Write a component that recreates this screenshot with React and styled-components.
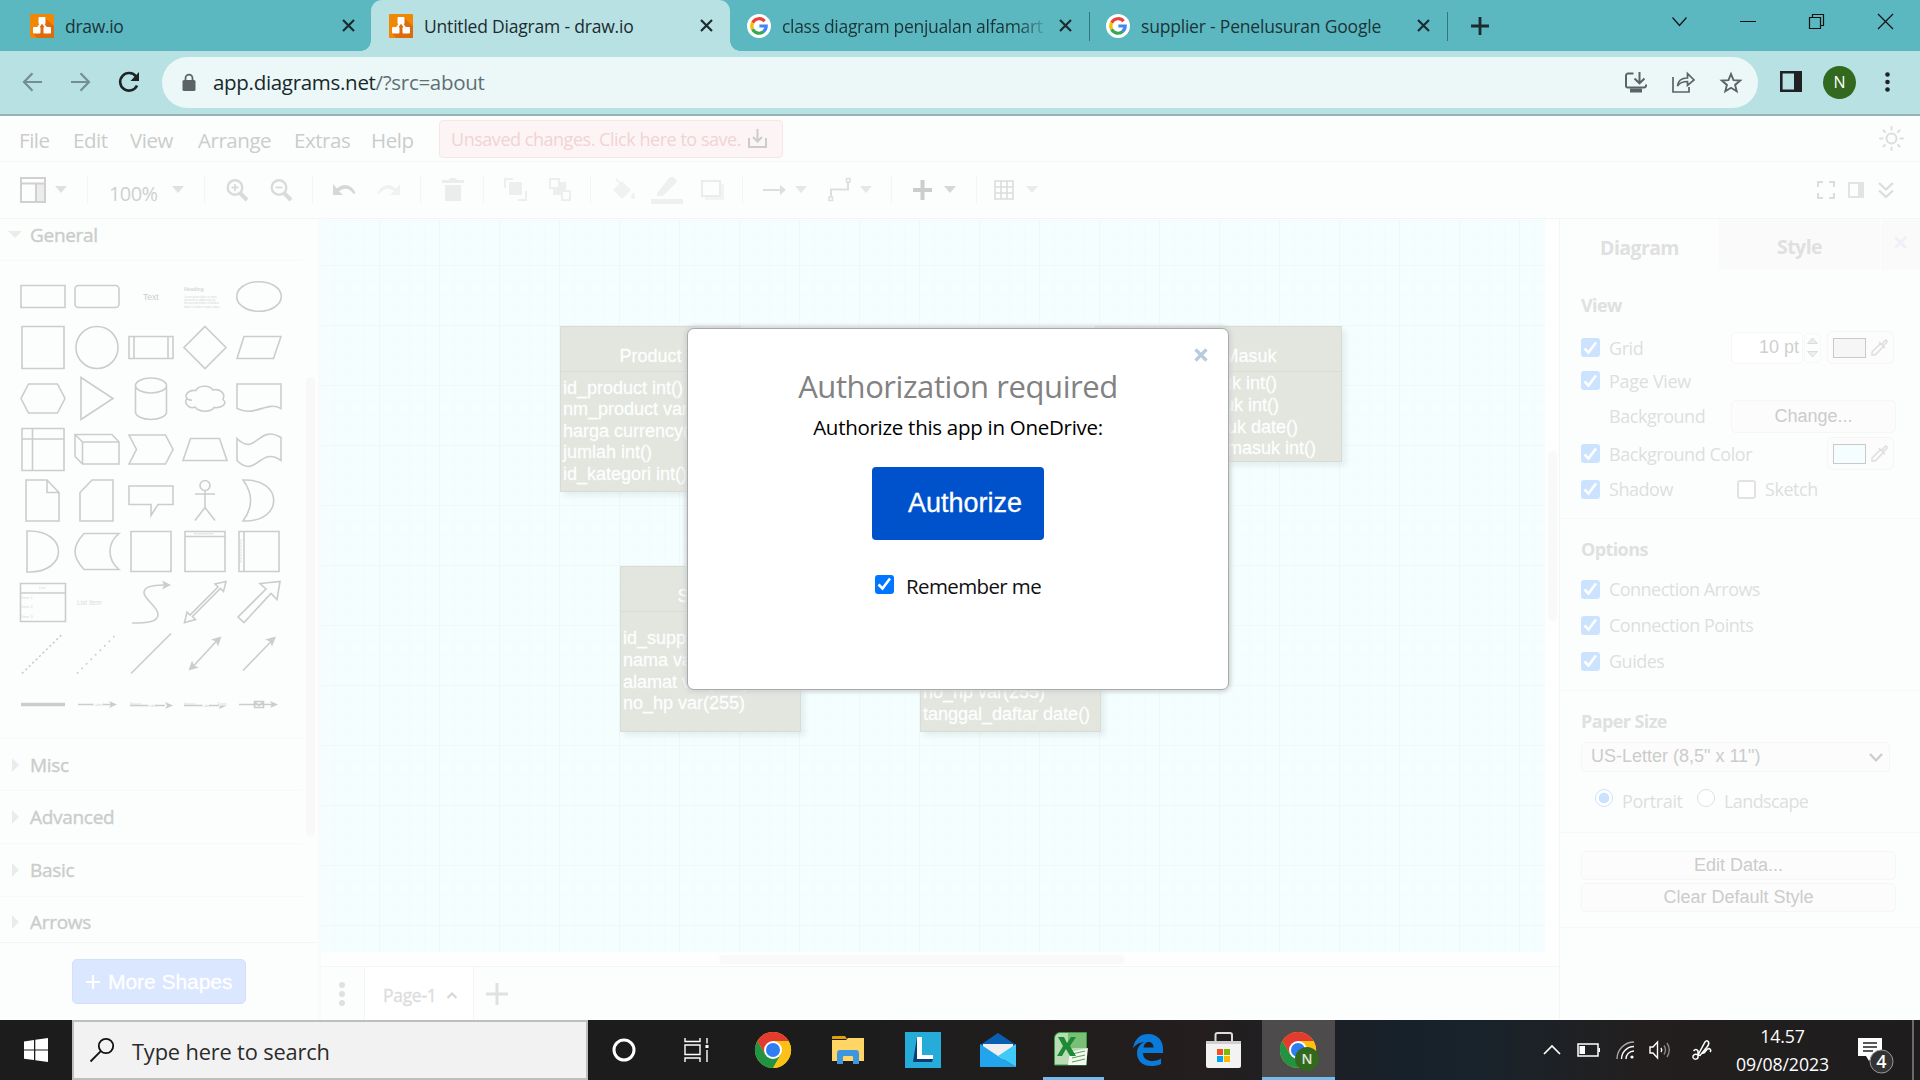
import React from "react";
import styled, { createGlobalStyle, css } from "styled-components";

const ui = `"Open Sans", "Noto Sans", sans-serif`;
const arial = `"Liberation Sans", Arial, sans-serif`;

const Global = createGlobalStyle`
  * { box-sizing: border-box; }
  html, body { margin: 0; padding: 0; overflow: hidden; }
  svg { display: block; flex: none; overflow: visible; }
`;

const Screen = styled.div`
  width: 1920px;
  height: 1080px;
  display: flex;
  flex-direction: column;
  overflow: hidden;
  background: #fcfefd;
  font-family: ${ui};
`;

const Text = styled.span`
  font-family: ${(p) => (p.$arial ? arial : ui)};
  font-size: ${(p) => p.$size || 18}px;
  font-weight: ${(p) => p.$weight || 400};
  letter-spacing: ${(p) => (p.$ls !== undefined ? p.$ls : p.$arial ? 0 : -0.3)}px;
  color: ${(p) => p.$color || "#dedede"};
  margin-left: ${(p) => p.$ml || 0}px;
  padding-top: ${(p) => p.$pt || 0}px;
  -webkit-text-stroke: ${(p) => p.$stroke || 0}px currentColor;
  white-space: nowrap;
  line-height: 1.2;
  flex: none;
`;

/* ---------- browser chrome ---------- */

const TabStrip = styled.div`
  height: 51px;
  flex: none;
  display: flex;
  background: #5bb8c1;
`;

const Tab = styled.div`
  position: relative;
  width: ${(p) => p.$w}px;
  height: 51px;
  padding-left: ${(p) => p.$pl}px;
  padding-right: ${(p) => p.$pr}px;
  display: flex;
  align-items: center;
  gap: 11px;
  ${(p) =>
    p.$active &&
    css`
      background: #b8e1e4;
      border-radius: 11px 11px 0 0;
      &::before,
      &::after {
        content: "";
        position: absolute;
        bottom: 0;
        width: 10px;
        height: 10px;
      }
      &::before {
        left: -10px;
        background: radial-gradient(circle at 0 0, #5bb8c1 9.5px, #b8e1e4 10px);
      }
      &::after {
        right: -10px;
        background: radial-gradient(circle at 100% 0, #5bb8c1 9.5px, #b8e1e4 10px);
      }
    `}
`;

const TabTitle = styled(Text)`
  flex: 1;
  overflow: hidden;
  line-height: 26px;
  -webkit-mask-image: ${(p) => (p.$fade ? "linear-gradient(90deg, #000 235px, transparent 268px)" : "none")};
`;

const TabDivider = styled.div`
  width: 1px;
  height: 29px;
  margin-top: 12px;
  background: #35747b;
`;

const WindowButtons = styled.div`
  display: flex;
  margin-left: auto;
  gap: 53px;
  padding: 14px 27px 0 0;
`;

const NewTab = styled.div`
  padding: 17px 0 0 23px;
`;

const AddressRow = styled.div`
  height: 65px;
  flex: none;
  display: flex;
  align-items: center;
  padding: 0 28px 2px 22px;
  background: #b8e1e4;
  border-bottom: 2px solid #95b4b8;
`;

const NavIcons = styled.div`
  display: flex;
  align-items: center;
  gap: 27px;
  width: 140px;
`;

const Omnibox = styled.div`
  width: 1596px;
  height: 51px;
  margin-top: 1px;
  border-radius: 26px;
  background: #ecf8f8;
  display: flex;
  align-items: center;
  padding: 0 16px 0 20px;
`;

const OmniActions = styled.div`
  display: flex;
  gap: 25px;
  margin-left: auto;
`;

const Avatar = styled.div`
  width: 33px;
  height: 33px;
  border-radius: 50%;
  margin: 2px 29px 0 21px;
  background: #33691e;
  display: flex;
  align-items: center;
  justify-content: center;
`;

const TabClose = () => (
  <svg width="13" height="13" viewBox="0 0 13 13">
    <path d="M1 1L12 12M12 1L1 12" stroke="#1c2b2e" strokeWidth="2.2" />
  </svg>
);

const DrawioLogo = () => (
  <svg width="24" height="24" viewBox="0 0 24 24">
    <rect width="24" height="24" rx="1" fill="#f08705" />
    <path d="M15 4L24 12V24H7L3 19L10 13Z" fill="#df6c0c" />
    <path d="M12 8L7 15M12 8L17 15" stroke="#fff" strokeWidth="2" />
    <rect x="8.5" y="3" width="7" height="7" rx="1" fill="#fff" />
    <rect x="3" y="13" width="7.5" height="6.5" rx="1" fill="#fff" />
    <rect x="13.5" y="13" width="7.5" height="6.5" rx="1" fill="#fff" />
  </svg>
);

const GoogleLogo = () => (
  <svg width="24" height="24" viewBox="0 0 24 24">
    <circle cx="12" cy="12" r="12" fill="#fff" />
    <g fill="none" strokeWidth="3.2">
      <path d="M17.6 7.3A7.2 7.2 0 0 0 5.6 8.7" stroke="#ea4335" />
      <path d="M5.6 8.7A7.2 7.2 0 0 0 5.6 15.3" stroke="#fbbc05" />
      <path d="M5.6 15.3A7.2 7.2 0 0 0 16.8 17.4" stroke="#34a853" />
      <path d="M16.6 17.5A7.2 7.2 0 0 0 19.2 12H12.4" stroke="#4285f4" />
    </g>
  </svg>
);

function Browser() {
  return (
    <>
      <TabStrip>
        <Tab $w={371} $pl={30} $pr={16}>
          <DrawioLogo />
          <TabTitle $size={17.5} $color="#1b3438">draw.io</TabTitle>
          <TabClose />
        </Tab>
        <Tab $active $w={359} $pl={18} $pr={17}>
          <DrawioLogo />
          <TabTitle $size={17.5} $color="#1c2b2e" $ls={-0.2}>Untitled Diagram - draw.io</TabTitle>
          <TabClose />
        </Tab>
        <Tab $w={359} $pl={17} $pr={17}>
          <GoogleLogo />
          <TabTitle $fade $size={17.5} $color="#1b3438">class diagram penjualan alfamart</TabTitle>
          <TabClose />
        </Tab>
        <TabDivider />
        <Tab $w={357} $pl={16} $pr={17}>
          <GoogleLogo />
          <TabTitle $size={17.5} $color="#1b3438" $ls={-0.2}>supplier - Penelusuran Google</TabTitle>
          <TabClose />
        </Tab>
        <TabDivider />
        <NewTab>
          <svg width="18" height="18" viewBox="0 0 18 18">
            <path d="M9 0V18M0 9H18" stroke="#1c2b2e" strokeWidth="2.8" />
          </svg>
        </NewTab>
        <WindowButtons>
          <svg width="15" height="15" viewBox="0 0 15 15" fill="none" stroke="#111" strokeWidth="1.2">
            <path d="M0.5 3.5L7.5 11.5L14.5 3.5" />
          </svg>
          <svg width="16" height="15" viewBox="0 0 16 15">
            <path d="M0 7.5H16" stroke="#111" />
          </svg>
          <svg width="16" height="15" viewBox="0 0 16 15" fill="none" stroke="#111" strokeWidth="1.2">
            <path d="M0.5 3.5H11.5V14.5H0.5ZM3.5 3.5V0.5H14.5V11.5H11.5" />
          </svg>
          <svg width="15" height="15" viewBox="0 0 15 15">
            <path d="M0 0L15 15M15 0L0 15" stroke="#111" strokeWidth="1.2" />
          </svg>
        </WindowButtons>
      </TabStrip>
      <AddressRow>
        <NavIcons>
          <svg width="21" height="20" viewBox="0 0 21 20" fill="none" stroke="#738f92" strokeWidth="2.2">
            <path d="M20 10H2M10.5 1.2L2 10L10.5 18.8" />
          </svg>
          <svg width="21" height="20" viewBox="0 0 21 20" fill="none" stroke="#738f92" strokeWidth="2.2">
            <path d="M1 10H19M10.5 1.2L19 10L10.5 18.8" />
          </svg>
          <svg width="22" height="20" viewBox="0 0 22 20">
            <path d="M18 4.5A8.8 8.8 0 1 0 19 13.5" fill="none" stroke="#1d2426" strokeWidth="2.6" />
            <path d="M21 0V9H12.5Z" fill="#1d2426" />
          </svg>
        </NavIcons>
        <Omnibox>
          <svg width="14" height="17" viewBox="0 0 14 17">
            <rect x="0.5" y="6" width="13" height="11" rx="1.5" fill="#5b6366" />
            <path d="M3.5 7V4.2a3.5 3.5 0 0 1 7 0V7" fill="none" stroke="#5b6366" strokeWidth="1.8" />
          </svg>
          <Text $size={20.5} $ml={17} $color="#17282b" $ls={-0.3}>
            app.diagrams.net<Text as="span" $size={20.5} $color="#5f6f73" $ls={-0.3}>/?src=about</Text>
          </Text>
          <OmniActions>
            <svg width="22" height="21" viewBox="0 0 22 21" fill="none" stroke="#5b6366" strokeWidth="2">
              <path d="M8.5 1.5H3A2 2 0 0 0 1 3.5V14A1.5 1.5 0 0 0 2.5 15.5H19A2 2 0 0 0 21 14V12.5M14.5 0V10M9.5 6.5L14.5 11.3L19.5 6.5" />
              <path d="M5 16.5H17V20.5H5Z" fill="#5b6366" stroke="none" />
            </svg>
            <svg width="23" height="21" viewBox="0 0 23 21" fill="none" stroke="#5b6366" strokeWidth="1.7">
              <path d="M1 5V20H17V15M5.5 14C6 8.5 10 6 15.5 6V1.5L22 8L15.5 13.5V9.5C11 9.5 7.5 11 5.5 14Z" />
            </svg>
            <svg width="22" height="21" viewBox="0 0 22 21" fill="none" stroke="#5b6366" strokeWidth="1.9">
              <path d="M11 2L13.5 8.1L20.2 8.6L15.1 12.9L16.7 19.3L11 15.8L5.3 19.3L6.9 12.9L1.8 8.6L8.5 8.1Z" />
            </svg>
          </OmniActions>
        </Omnibox>
        <svg width="22" height="21" viewBox="0 0 22 21" style={{ marginLeft: 22 }}>
          <path d="M1.3 1.3H20.7V19.7H1.3Z" fill="none" stroke="#202124" strokeWidth="2.6" />
          <rect x="14" y="1" width="7" height="19" fill="#202124" />
        </svg>
        <Avatar>
          <Text $size={16} $color="#fff" $ls={0}>N</Text>
        </Avatar>
        <svg width="5" height="20" viewBox="0 0 5 20" fill="#202124">
          <circle cx="2.5" cy="2.5" r="2.3" />
          <circle cx="2.5" cy="10" r="2.3" />
          <circle cx="2.5" cy="17.5" r="2.3" />
        </svg>
      </AddressRow>
    </>
  );
}

/* ---------- editor menus ---------- */

const MenuBar = styled.div`
  height: 46px;
  flex: none;
  display: flex;
  align-items: center;
  padding: 0 16px 0 19px;
  border-bottom: 1px solid #f5f6f5;
`;

const MenuItem = styled.div`
  width: ${(p) => p.$w}px;
  padding-top: 3px;
`;

const SaveNotice = styled.div`
  width: 344px;
  height: 38px;
  display: flex;
  align-items: center;
  justify-content: space-between;
  padding: 0 15px 0 11px;
  border: 1px solid #f8e6e7;
  border-radius: 4px;
  background: #fdf5f5;
`;

const Push = styled.div`
  margin-left: auto;
`;

const ToolBar = styled.div`
  height: 57px;
  flex: none;
  display: flex;
  align-items: center;
  padding: 0 26px 1px 0;
  border-bottom: 1px solid #f4f5f4;
`;

const Tool = styled.div`
  width: ${(p) => p.$w}px;
  height: 28px;
  margin-left: ${(p) => p.$gap}px;
  display: flex;
  align-items: center;
  color: ${(p) => p.$c || "#dedede"};
  flex: none;
`;

const ToolSep = styled.div`
  width: 1px;
  height: 29px;
  flex: none;
  margin-left: ${(p) => p.$gap}px;
  background: #f4f5f4;
`;

const Draw = ({ w, h, sw = 2, children }) => (
  <svg width={w} height={h} viewBox={`0 0 ${w} ${h}`} fill="none" stroke="currentColor" strokeWidth={sw}>
    {children}
  </svg>
);

const Caret = ({ gap, c = "#e0e0e0" }) => (
  <Tool $gap={gap} $w={12} $c={c}>
    <Draw w={12} h={7}><path d="M0 0H12L6 7Z" fill="currentColor" stroke="none" /></Draw>
  </Tool>
);

function Menus() {
  const menus = [["File", 54], ["Edit", 57], ["View", 68], ["Arrange", 96], ["Extras", 77], ["Help", 68]];
  return (
    <>
      <MenuBar>
        {menus.map(([name, w]) => (
          <MenuItem key={name} $w={w}>
            <Text $size={20.5} $color="#cbcccb" $ls={-0.45}>{name}</Text>
          </MenuItem>
        ))}
        <SaveNotice>
          <Text $size={18} $pt={2} $color="#f1d3d4" $ls={-0.47}>Unsaved changes. Click here to save.</Text>
          <svg width="19" height="19" viewBox="0 0 19 19" fill="none" stroke="#cbcccb" strokeWidth="2">
            <path d="M1 9V18H18V9M9.5 0V12M5 8L9.5 12.5L14 8" />
          </svg>
        </SaveNotice>
        <Push>
          <svg width="25" height="25" viewBox="-12.5 -12.5 25 25" fill="none" stroke="#dcdddc" strokeWidth="2" strokeLinecap="round">
            <circle r="5" />
            <path d="M0-11.5V-9M0 11.5V9M-11.5 0H-9M11.5 0H9M-8-8L-6.5-6.5M8 8L6.5 6.5M-8 8L-6.5 6.5M8-8L6.5-6.5" />
          </svg>
        </Push>
      </MenuBar>
      <ToolBar>
        <Tool $gap={20} $w={26} $c="#cfd0cf">
          <Draw w={26} h={26}>
            <rect x="16" y="6" width="9" height="19" fill="#ececec" stroke="none" />
            <path d="M1 1H25V25H1ZM1 6.5H25M16 6.5V25" />
          </Draw>
        </Tool>
        <Caret gap={9} />
        <ToolSep $gap={20} />
        <Tool $gap={21} $w={51}><Text $size={20} $color="#cfd0cf" $ls={-0.6} $pt={8}>100%</Text></Tool>
        <Caret gap={12} />
        <ToolSep $gap={20} />
        <Tool $gap={21} $w={22} $c="#d9dad9">
          <Draw w={22} h={22} sw={2.4}><circle cx="9" cy="8.5" r="7.3" /><path d="M14 14L21 21" strokeWidth="4" /><path d="M9 5V12M5.5 8.5H12.5" strokeWidth="1.8" /></Draw>
        </Tool>
        <Tool $gap={22} $w={22} $c="#d9dad9">
          <Draw w={22} h={22} sw={2.4}><circle cx="9" cy="8.5" r="7.3" /><path d="M14 14L21 21" strokeWidth="4" /><path d="M5.5 8.5H12.5" strokeWidth="1.8" /></Draw>
        </Tool>
        <ToolSep $gap={20} />
        <Tool $gap={20} $w={23} $c="#d6d7d6">
          <Draw w={23} h={12}><path d="M0 0V11H10L6 7.2C11 3 17 4 20.5 10L22.5 9C19 0.5 10-1.5 4 4.5Z" fill="currentColor" stroke="none" /></Draw>
        </Tool>
        <Tool $gap={21} $w={23} $c="#f0f1f0">
          <Draw w={23} h={12}><path d="M23 0V11H13L17 7.2C12 3 6 4 2.5 10L0.5 9C4 0.5 13-1.5 19 4.5Z" fill="currentColor" stroke="none" /></Draw>
        </Tool>
        <ToolSep $gap={20} />
        <Tool $gap={21} $w={22} $c="#ebeceb">
          <Draw w={22} h={23}><path d="M0 2H7L8 0H14L15 2H22V5H0ZM3 7H19V23H3Z" fill="currentColor" stroke="none" /></Draw>
        </Tool>
        <ToolSep $gap={19} />
        <Tool $gap={20} $w={23} $c="#edeeed">
          <Draw w={23} h={23}><path d="M5 4H18V17H5Z" fill="currentColor" stroke="none" /><path d="M9 1H1V10M22 13V22H14" /></Draw>
        </Tool>
        <Tool $gap={22} $w={22} $c="#edeeed">
          <Draw w={22} h={23}><path d="M4 4H17V17H4Z" fill="currentColor" stroke="none" /><path d="M1 1H10V10H1ZM13 13H21V22H13Z" fill="#fcfefd" /></Draw>
        </Tool>
        <ToolSep $gap={19} />
        <Tool $gap={20} $w={25} $c="#f0f1f0">
          <Draw w={25} h={24}><path d="M2 12L11 3L20 12L11 21ZM22 14C26 20 24 21 22 21S19 19 22 14Z" fill="currentColor" stroke="none" /><path d="M5 1L13 9" /></Draw>
        </Tool>
        <Tool $gap={15} $w={32} $c="#efefef">
          <Draw w={32} h={28}><path d="M6 17L18 2Q21-1 25 3Q27 5 24 8L12 20H6ZM0 23H32V28H0Z" fill="currentColor" stroke="none" /></Draw>
        </Tool>
        <Tool $gap={18} $w={23} $c="#f2f3f2">
          <Draw w={23} h={20}><path d="M4 4H23V20H4Z" fill="currentColor" stroke="none" /><rect x="1" y="1" width="18" height="15" fill="#fcfefd" stroke="#ececec" /></Draw>
        </Tool>
        <ToolSep $gap={18} />
        <Tool $gap={20} $w={23}>
          <Draw w={23} h={10}><path d="M0 5H18" /><path d="M17 0L23 5L17 10Z" fill="currentColor" stroke="none" /></Draw>
        </Tool>
        <Caret gap={9} c="#e6e6e6" />
        <Tool $gap={21} $w={23}>
          <Draw w={23} h={23}><path d="M3 19V11.5H20V4" /><path d="M1 19H4.5V22.5H1ZM18.5 0.5H22V4H18.5Z" strokeWidth="1.5" /></Draw>
        </Tool>
        <Caret gap={9} c="#e6e6e6" />
        <ToolSep $gap={19} />
        <Tool $gap={21} $w={19} $c="#cbcccb">
          <Draw w={19} h={20} sw={4}><path d="M9.5 0V20M0 10H19" /></Draw>
        </Tool>
        <Caret gap={12} c="#d6d6d6" />
        <ToolSep $gap={20} />
        <Tool $gap={17} $w={20} $c="#dcdcdc">
          <Draw w={20} h={20} sw={1.6}><path d="M1 1H19V19H1ZM7 1V19M13 1V19M1 7H19M1 13H19" /></Draw>
        </Tool>
        <Caret gap={12} c="#eaeaea" />
        <Push />
        <Tool $gap={0} $w={18} $c="#dcdcdc">
          <Draw w={18} h={18}><path d="M1 6V1H6M12 1H17V6M17 12V17H12M6 17H1V12" /></Draw>
        </Tool>
        <Tool $gap={13} $w={16} $c="#e2e3e2">
          <Draw w={16} h={16}><rect x="10" y="0" width="6" height="16" fill="currentColor" stroke="none" /><path d="M1 1H15V15H1Z" /></Draw>
        </Tool>
        <Tool $gap={14} $w={16} $c="#dcdcdc">
          <Draw w={16} h={16}><path d="M1 1L8 7.5L15 1M1 8.5L8 15L15 8.5" strokeWidth="2.3" /></Draw>
        </Tool>
      </ToolBar>
    </>
  );
}

/* ---------- shape palette ---------- */

const Sidebar = styled.div`
  width: 321px;
  flex: none;
  display: flex;
  flex-direction: column;
  border-right: 3px solid #f9fafa;
`;

const SidebarScroll = styled.div`
  height: 724px;
  display: flex;
  border-bottom: 1px solid #f4f5f4;
`;

const SectionList = styled.div`
  width: 303px;
`;

const SectionHead = styled.div`
  height: ${(p) => p.$h}px;
  display: flex;
  align-items: center;
  padding-left: ${(p) => p.$pl}px;
  padding-bottom: ${(p) => p.$pb || 0}px;
  gap: ${(p) => p.$gap}px;
  border-bottom: ${(p) => (p.$last ? "none" : "1px solid #f8f9f8")};
`;

const Palette = styled.div`
  height: 478px;
  padding: 10px 0 0 16px;
  display: grid;
  grid-template-columns: repeat(5, 54px);
  grid-auto-rows: 51px;
  align-content: start;
  border-bottom: 1px solid #f8f9f8;
`;

const PaletteThumb = styled.div`
  width: 9px;
  height: 459px;
  margin: 158px 0 0 3px;
  border-radius: 5px;
  background: #f7f8f7;
`;

const MoreShapes = styled.button`
  width: 174px;
  height: 45px;
  margin: 16px 0 0 72px;
  display: flex;
  align-items: center;
  padding: 0 0 0 13px;
  border: 1px solid #d3e0fb;
  border-radius: 5px;
  background: #dbe7ff;
`;

const Cell = ({ children, sw = 1.6 }) => (
  <svg width="54" height="51" viewBox="-27 -25.5 54 51" fill="none" stroke="#cbcccb" strokeWidth={sw}>
    {children}
  </svg>
);

const P = (d, extra) => <path d={d} {...extra} />;
const solid = { fill: "#cbcccb", stroke: "none" };
const Tiny = ({ x, y, size, children, c = "#d6d7d6", weight }) => (
  <text x={x} y={y} fontSize={size} fontFamily="Liberation Sans" fontWeight={weight} fill={c} stroke="none">
    {children}
  </text>
);

const shapes = [
  P("M-22-11H22V11H-22Z"),
  <rect x="-22" y="-11" width="44" height="22" rx="3.5" />,
  <Tiny x={-8} y={3} size={8.5} c="#cbcccb">Text</Tiny>,
  <>
    <Tiny x={-21} y={-5.5} size={5} weight="700">Heading</Tiny>
    <Tiny x={-21} y={1} size={2.7}>Lorem ipsum dolor sit amet,</Tiny>
    <Tiny x={-21} y={4.2} size={2.7}>consectetur adipisicing elit</Tiny>
    <Tiny x={-21} y={7.4} size={2.7}>do eiusmod tempor incididunt</Tiny>
    <Tiny x={-21} y={11} size={2.7}>labore et dolore magna aliqua.</Tiny>
  </>,
  <ellipse rx="22.3" ry="14.8" />,

  P("M-21-21H21V21H-21Z"),
  <circle r="21" />,
  P("M-22-11H22V11H-22ZM-17-11V11M17-11V11"),
  P("M0-21L21 0L0 21L-21 0Z"),
  P("M-15-11H22L14.5 11H-22Z"),

  P("M-14.5-14.5H14.5L22 0L14.5 14.5H-14.5L-22 0Z"),
  P("M-16-21L16 0L-16 21Z"),
  P("M-15.5-13A15.5 7.5 0 0 1 15.5-13V13.5A15.5 7.5 0 0 1-15.5 13.5ZM-15.5-13A15.5 7.5 0 0 0 15.5-13"),
  P("M-9-8C-16-9-21-4-18 0C-22 5-15 11-10 8.5C-6 14 6 14 9 9C17 10 23 5 18 1C21-6 14-10 8-8.5C4-14-7-13-9-8ZM-18 0Q-16 2-13 1.5"),
  P("M-22-14.5H22V10C8 2-4 19-22 10Z"),

  P("M-21-21H21V21H-21ZM-10.5-21V21M-21-10.5H21"),
  <>
    {P("M-22-15H15L22-7.5V14.5H-14.5L-22 7Z")}
    {P("M-22-15L-14.5-7.5H22M-14.5-7.5V14.5")}
  </>,
  P("M-22-14.5H14.5L22 0L14.5 14.5H-22L-14.5 0Z"),
  P("M-14.5-11H14.5L22 11H-22Z"),
  P("M-22-11C-3 8-1-26 22-12V11C1-4-3 30-22 11Z"),

  P("M-17-20.5H4L16-8V20.5H-17ZM4-20.5V-8H16"),
  P("M-5-20.5H16V20.5H-17V-8Z"),
  P("M-22-14.5H22V4H7L0 15V4H-22Z"),
  P("M-10-6.5H10M0-10V7M0 7L-10 20M0 7L10 20M5-15A5 5 0 1 1-5-15A5 5 0 1 1 5-15Z"),
  P("M-16-20.5C25-22 25 22-16 20.5C-6 7-6-7-16-20.5Z"),

  P("M-16-20.5C26-22 26 22-16 20.5Z"),
  P("M-13-18H22C10-8 10 8 22 18H-13C-25 5-25-5-13-18Z"),
  P("M-20-20H20V20H-20Z"),
  <>{P("M-20-20H20V20H-20ZM-20-15H20")}<path d="M-11-17.7H9" strokeWidth="0.8" strokeDasharray="2 0.5" /></>,
  <>{P("M-20-20H20V20H-20ZM-15-20V20")}<path d="M-18-12V12" strokeWidth="0.7" strokeDasharray="2 1" /></>,

  <>
    {P("M-22.5-19H22.5V19H-22.5ZM-22.5-9.5H22.5")}
    <Tiny x={-4} y={-13.5} size={4}>List</Tiny>
    <Tiny x={-21.5} y={-4} size={4}>Item 1</Tiny>
    <Tiny x={-21.5} y={5} size={4}>Item 2</Tiny>
    <Tiny x={-21.5} y={15} size={4}>Item 3</Tiny>
  </>,
  <Tiny x={-20} y={2} size={6.5} c="#dadbda">List Item</Tiny>,
  <>{P("M-19 20.5C-5 20.5 7 20 7 12C7 4-7-3-7-10C-7-16 1-17.5 13-17.5")}{P("M20-17.5L11-22L13-17.5L11-13Z", solid)}</>,
  P("M21-21L18.5-11L15.5-14L-12.5 14L-9.5 17L-20.5 20L-18 9.5L-15 12.5L13-15.5L10-18.5Z"),
  P("M21-21L18-3L12-9L-15 20L-21 14.5L7-13.5L1-19Z"),

  P("M-21 20L20-20", { strokeDasharray: "2.2 2.6" }),
  P("M-20 20L19-19", { strokeDasharray: "1.8 4.6" }),
  P("M-20 20L20-20"),
  <>{P("M-12 13L12-13")}{P("M-16.5 17L-13 7L-11 12L-6 14ZM16.5-17L13-7L11-12L6-14Z", solid)}</>,
  <>{P("M-16 17L13-13")}{P("M17-17L13-7L11-12L6-14Z", solid)}</>,

  P("M-22 0H22", { strokeWidth: 3.6 }),
  <>{P("M-19 0H-4M6 0H14")}{P("M20 0L12-3.5L14 0L12 3.5Z", solid)}<Tiny x={-4} y={1.5} size={4}>Label</Tiny></>,
  <>{P("M-21 1H-12")}{P("M-12 1H-3M4 1H14")}{P("M22 1L14-2.5L16 1L14 4.5Z", solid)}<Tiny x={-21} y={0} size={3.5}>Source</Tiny><Tiny x={-3} y={2} size={3.5}>Label</Tiny></>,
  <>{P("M-21 1H-12")}{P("M-12 1H-3M4 1H14")}{P("M22 1L15 1L14 4.5Z", solid)}<Tiny x={-21} y={0} size={3.5}>Source</Tiny><Tiny x={-3} y={2} size={3.5}>Label</Tiny><Tiny x={12} y={0} size={3.5}>Target</Tiny></>,
  <>{P("M-20 0H14M-4.5-3H4.5V3H-4.5ZM-4-2L0 1L4-2")}{P("M19 0L11-3.5L13 0L11 3.5Z", solid)}</>,
];

function ShapeSidebar() {
  const closed = [["Misc", 52], ["Advanced", 53], ["Basic", 53], ["Arrows", 49]];
  return (
    <Sidebar>
      <SidebarScroll>
        <SectionList>
          <SectionHead $h={42} $pl={8} $gap={8} $pb={10}>
            <svg width="14" height="7" viewBox="0 0 14 7"><path d="M0 0H14L7 7Z" fill="#ebecea" /></svg>
            <Text $size={19} $color="#cbcccb" $stroke={0.4} $ls={-0.3} $pt={2}>General</Text>
          </SectionHead>
          <Palette>
            {shapes.map((s, i) => <Cell key={i}>{s}</Cell>)}
          </Palette>
          {closed.map(([name, h], i) => (
            <SectionHead key={name} $h={h} $pl={12} $gap={11} $last={i === 3}>
              <svg width="7" height="14" viewBox="0 0 7 14"><path d="M0 0L7 7L0 14Z" fill="#ebecea" /></svg>
              <Text $size={19} $color="#cbcccb" $stroke={0.4} $ls={-0.3} $pt={1}>{name}</Text>
            </SectionHead>
          ))}
        </SectionList>
        <PaletteThumb />
      </SidebarScroll>
      <MoreShapes>
        <svg width="14" height="14" viewBox="0 0 14 14"><path d="M7 0V14M0 7H14" stroke="#fff" strokeWidth="2.2" /></svg>
        <Text $arial $size={21} $color="#fff" $ml={8} $stroke={0.3} $ls={-0.05}>More Shapes</Text>
      </MoreShapes>
    </Sidebar>
  );
}

/* ---------- canvas ---------- */

const Main = styled.div`
  height: 801px;
  flex: none;
  display: flex;
`;

const Center = styled.div`
  width: 1238px;
  flex: none;
  display: flex;
  flex-direction: column;
`;

const CanvasRow = styled.div`
  display: flex;
  height: 733px;
  padding-top: 1px;
  background: #fefefe;
`;

const Canvas = styled.div`
  position: relative;
  width: 1224px;
  height: 732px;
  background-color: #f5feff;
  background-image:
    linear-gradient(90deg, #eff8f9 1px, transparent 1px),
    linear-gradient(#eff8f9 1px, transparent 1px),
    linear-gradient(90deg, #f3fcfd 1px, transparent 1px),
    linear-gradient(#f3fcfd 1px, transparent 1px);
  background-size: 60px 60px, 60px 60px, 15px 15px, 15px 15px;
  background-position: 58px 45px;
`;

const VThumb = styled.div`
  width: 9px;
  height: 170px;
  margin: 231px 0 0 3px;
  border-radius: 5px;
  background: #f8f9f8;
`;

const HScroll = styled.div`
  height: 15px;
  padding: 3px 0 0 398px;
  background: #fefefe;
  border-bottom: 1px solid #f4f5f4;
`;

const HThumb = styled.div`
  width: 406px;
  height: 9px;
  border-radius: 5px;
  background: #f8f9f8;
`;

/* diagram node, placed freely on the drawing surface */
const Node = styled.div`
  position: absolute;
  left: ${(p) => p.$x - 321}px;
  top: ${(p) => p.$y - 220}px;
  width: ${(p) => p.$w}px;
  height: ${(p) => p.$h}px;
  display: flex;
  flex-direction: column;
  border: 1px solid #d8dcd4;
  background: #e2e6df;
  box-shadow: 4px 4px 5px rgba(110, 130, 135, 0.12);
  -webkit-text-stroke: 0.3px #fdfefd;
`;

const NodeTitle = styled.div`
  height: 45px;
  flex: none;
  padding-top: 18px;
  text-align: center;
  border-bottom: 1px solid #d8dcd4;
  font: 18px/22px ${arial};
  color: #fdfefd;
`;

const NodeBody = styled.div`
  flex: 1;
  display: flex;
  flex-direction: column;
  justify-content: center;
  padding: 0 2px;
  font: 18px/21.6px ${arial};
  color: #fdfefd;
  white-space: nowrap;
`;

const NodeLine = styled.div`
  text-align: ${(p) => (p.$end ? "right" : "left")};
  padding-right: ${(p) => p.$end || 0}px;
`;

const PageBar = styled.div`
  height: 53px;
  display: flex;
  align-items: center;
`;

const PageMenu = styled.div`
  width: 43px;
  padding-left: 18px;
`;

const PageTab = styled.div`
  width: 110px;
  height: 53px;
  display: flex;
  align-items: center;
  gap: 11px;
  padding: 3px 0 0 18px;
  border: solid #f4f5f4;
  border-width: 0 1px;
  background: #fff;
`;

const PageAdd = styled.div`
  margin-left: 12px;
`;

function CanvasArea() {
  return (
    <Center>
      <CanvasRow>
        <Canvas>
          <Node $x={560} $y={326} $w={181} $h={166}>
            <NodeTitle>Product</NodeTitle>
            <NodeBody>
              <NodeLine>id_product int()</NodeLine>
              <NodeLine>nm_product var(255)</NodeLine>
              <NodeLine>harga currency()</NodeLine>
              <NodeLine>jumlah int()</NodeLine>
              <NodeLine>id_kategori int()</NodeLine>
            </NodeBody>
          </Node>
          <Node $x={1095} $y={326} $w={247} $h={136}>
            <NodeTitle>Barang Masuk</NodeTitle>
            <NodeBody>
              <NodeLine $end={62}>id_masuk int()</NodeLine>
              <NodeLine $end={60}>id_produk int()</NodeLine>
              <NodeLine $end={41}>tgl_masuk date()</NodeLine>
              <NodeLine $end={23}>jumlah_masuk int()</NodeLine>
            </NodeBody>
          </Node>
          <Node $x={620} $y={566} $w={181} $h={166}>
            <NodeTitle>Supplier</NodeTitle>
            <NodeBody>
              <NodeLine>id_supplier int()</NodeLine>
              <NodeLine>nama var(255)</NodeLine>
              <NodeLine>alamat var(255)</NodeLine>
              <NodeLine>no_hp var(255)</NodeLine>
            </NodeBody>
          </Node>
          <Node $x={920} $y={566} $w={181} $h={166}>
            <NodeTitle />
            <NodeBody>
              <NodeLine>id_member int()</NodeLine>
              <NodeLine>nama var(255)</NodeLine>
              <NodeLine>alamat var(255)</NodeLine>
              <NodeLine>no_hp var(255)</NodeLine>
              <NodeLine>tanggal_daftar date()</NodeLine>
            </NodeBody>
          </Node>
        </Canvas>
        <VThumb />
      </CanvasRow>
      <HScroll><HThumb /></HScroll>
      <PageBar>
        <PageMenu>
          <svg width="6" height="24" viewBox="0 0 6 24" fill="#dfe0df">
            <circle cx="3" cy="3" r="3" /><circle cx="3" cy="12" r="3" /><circle cx="3" cy="21" r="3" />
          </svg>
        </PageMenu>
        <PageTab>
          <Text $size={17.5} $color="#dcdddc" $stroke={0.3} $ls={-0.3}>Page-1</Text>
          <svg width="10" height="7" viewBox="0 0 10 7"><path d="M0.5 6L5 1.5L9.5 6" fill="none" stroke="#d4d5d4" strokeWidth="2" /></svg>
        </PageTab>
        <PageAdd>
          <svg width="22" height="22" viewBox="0 0 22 22"><path d="M11 0V22M0 11H22" stroke="#e0e1e0" strokeWidth="3" /></svg>
        </PageAdd>
      </PageBar>
    </Center>
  );
}

/* ---------- format panel ---------- */

const Panel = styled.div`
  width: 361px;
  flex: none;
  display: flex;
  flex-direction: column;
  padding-top: 1px;
  border-left: 1px solid #f4f5f4;
`;

const PanelTabs = styled.div`
  height: 50px;
  flex: none;
  display: flex;
`;

const PanelTab = styled.div`
  width: ${(p) => p.$w}px;
  display: flex;
  align-items: center;
  justify-content: center;
  padding-top: ${(p) => p.$pt || 0}px;
  padding-bottom: ${(p) => p.$pb || 0}px;
  background: ${(p) => (p.$off ? "#fafafa" : "transparent")};
  border-right: ${(p) => (p.$line ? "1px solid #fdfefd" : "none")};
`;

const Section = styled.div`
  height: ${(p) => p.$h}px;
  flex: none;
  padding: ${(p) => p.$pt}px 0 0 21px;
  border-bottom: 1px solid #f6f7f6;
`;

const Heading = styled.div`
  height: 26px;
  display: flex;
  align-items: center;
  padding-top: 2px;
  margin-bottom: ${(p) => p.$mb}px;
`;

const Row = styled.div`
  height: ${(p) => p.$h}px;
  margin-top: ${(p) => p.$mt || 0}px;
  margin-bottom: ${(p) => p.$mb || 0}px;
  padding-left: ${(p) => p.$pl || 0}px;
  display: flex;
  align-items: center;
`;

const Field = styled.div`
  width: ${(p) => p.$w}px;
  display: flex;
  align-items: center;
  gap: 9px;
`;

const NumberBox = styled.div`
  width: 72px;
  height: 32px;
  display: flex;
  align-items: center;
  justify-content: flex-end;
  padding-right: 3px;
  border: 1px solid #f5f6f5;
  border-radius: 5px;
  background: #fff;
`;

const Stepper = styled.div`
  width: 17px;
  height: 30px;
  margin: 0 6px 0 1px;
  display: flex;
  flex-direction: column;
  align-items: center;
  justify-content: space-around;
  border: 1px solid #f6f7f6;
  border-radius: 4px;
`;

const ColorButton = styled.div`
  width: 67px;
  height: 33px;
  display: flex;
  align-items: center;
  gap: 5px;
  padding-left: 5px;
  border: 1px solid #f6f6f6;
  border-radius: 5px;
  background: #fcfcfc;
`;

const Swatch = styled.div`
  width: 33px;
  height: 20px;
  border: 1px solid #c9c9c9;
  background: ${(p) => p.$c};
`;

const FlatButton = styled.button`
  width: ${(p) => p.$w}px;
  height: ${(p) => p.$h}px;
  display: block;
  margin: 0 0 ${(p) => p.$mb || 0}px;
  padding: 0 0 ${(p) => p.$pb || 0}px;
  border: 1px solid #f6f6f6;
  border-radius: 5px;
  background: #fcfcfc;
  font: 18px/20px ${arial};
  color: #cbcccb;
`;

const Select = styled.div`
  width: 309px;
  height: 30px;
  display: flex;
  align-items: center;
  justify-content: space-between;
  padding: 0 6px 0 9px;
  border: 1px solid #f6f6f6;
  border-radius: 5px;
  background: #fcfcfc;
`;

const Box = styled.span`
  width: 19px;
  height: 19px;
  flex: none;
  border-radius: 3px;
  display: flex;
  align-items: center;
  justify-content: center;
  background: ${(p) => (p.$on ? p.$c || "#cce3ff" : "#fff")};
  border: ${(p) => (p.$on ? "none" : "2px solid #e2e2e2")};
`;

const Radio = styled.span`
  width: 18px;
  height: 18px;
  flex: none;
  margin-bottom: 6px;
  border-radius: 50%;
  border: 1.5px solid ${(p) => (p.$on ? "#cce3ff" : "#e0e0e0")};
  background: ${(p) => (p.$on ? "radial-gradient(circle, #cce3ff 5px, #fff 5.7px)" : "#fff")};
`;

const Check = ({ on = true, c }) => (
  <Box $on={on} $c={c}>
    {on && (
      <svg width="15" height="14" viewBox="0 0 15 14"><path d="M1.5 7.5L5.5 11.5L13 1.5" fill="none" stroke="#fff" strokeWidth="2.6" /></svg>
    )}
  </Box>
);

const Pipette = () => (
  <svg width="17" height="17" viewBox="0 0 17 17" fill="none" stroke="#dcdddc" strokeWidth="1.5">
    <path d="M1 16V13L9.5 4.5L12.5 7.5L4 16ZM8 3L14 9M11 5L14 1.5Q16 0.5 16 3L12.5 6.5" />
  </svg>
);

const Option = ({ w, children, on, ls = -0.45 }) => (
  <Field $w={w}>
    <Check on={on} />
    <Text $size={18} $ls={ls} $pt={2}>{children}</Text>
  </Field>
);

function FormatPanel() {
  return (
    <Panel>
      <PanelTabs>
        <PanelTab $w={159} $pt={5}><Text $size={19.5} $weight={700} $color="#dfe0df" $ls={-0.6}>Diagram</Text></PanelTab>
        <PanelTab $w={162} $off $line $pt={3}><Text $size={19.5} $weight={700} $color="#dfe0df" $ls={-0.55}>Style</Text></PanelTab>
        <PanelTab $w={39} $off $pb={5}>
          <svg width="13" height="13" viewBox="0 0 13 13"><path d="M1 1L12 12M12 1L1 12" stroke="#eef1f8" strokeWidth="3" /></svg>
        </PanelTab>
      </PanelTabs>
      <Section $h={249} $pt={22}>
        <Heading $mb={13}><Text $weight={700} $color="#dfe0df" $ls={-0.6}>View</Text></Heading>
        <Row $h={33}>
          <Option w={150}>Grid</Option>
          <NumberBox><Text $arial $size={18} $color="#cfd0cf">10 pt</Text></NumberBox>
          <Stepper>
            <svg width="11" height="7" viewBox="0 0 11 7"><path d="M0.5 6.5H10.5L5.5 1Z" fill="#ececec" stroke="#dcdcdc" /></svg>
            <svg width="11" height="7" viewBox="0 0 11 7"><path d="M0.5 0.5H10.5L5.5 6Z" fill="#ececec" stroke="#dcdcdc" /></svg>
          </Stepper>
          <ColorButton><Swatch $c="#f6f6f6" /><Pipette /></ColorButton>
        </Row>
        <Row $h={33} $mb={3}><Option ls={-0.3}>Page View</Option></Row>
        <Row $h={33} $mb={4}>
          <Field $w={150}><Text $ml={28} $size={18} $ls={-0.45}>Background</Text></Field>
          <FlatButton $w={165} $h={33} $pb={1}>Change...</FlatButton>
        </Row>
        <Row $h={33} $mb={3}>
          <Option w={246}>Background Color</Option>
          <ColorButton><Swatch $c="#f5feff" /><Pipette /></ColorButton>
        </Row>
        <Row $h={32}>
          <Option w={156}>Shadow</Option>
          <Option on={false}>Sketch</Option>
        </Row>
      </Section>
      <Section $h={172} $pt={17}>
        <Heading $mb={9}><Text $weight={700} $color="#dfe0df" $ls={-0.6}>Options</Text></Heading>
        <Row $h={36}><Option ls={-0.53}>Connection Arrows</Option></Row>
        <Row $h={36}><Option ls={-0.5}>Connection Points</Option></Row>
        <Row $h={36}><Option ls={-0.5}>Guides</Option></Row>
      </Section>
      <Section $h={142} $pt={17}>
        <Heading $mb={8}><Text $weight={700} $color="#dfe0df" $ls={-0.6}>Paper Size</Text></Heading>
        <Select>
          <Text $arial $size={18} $color="#cbcccb">US-Letter (8,5" x 11")</Text>
          <svg width="14" height="9" viewBox="0 0 14 9"><path d="M1 1L7 7.5L13 1" fill="none" stroke="#cbcccb" strokeWidth="2.2" /></svg>
        </Select>
        <Row $h={34} $pl={14} $mt={12}>
          <Field $w={102}><Radio $on /><Text $pt={2} $ls={-0.4}>Portrait</Text></Field>
          <Field><Radio /><Text $pt={2} $ls={-0.6}>Landscape</Text></Field>
        </Row>
      </Section>
      <Section $h={95} $pt={18}>
        <FlatButton $w={315} $h={29} $mb={3} $pb={2}>Edit Data...</FlatButton>
        <FlatButton $w={315} $h={29} $pb={2}>Clear Default Style</FlatButton>
      </Section>
    </Panel>
  );
}

/* ---------- authorization dialog ---------- */

const Dialog = styled.div`
  position: absolute;
  left: 687px;
  top: 328px;
  width: 542px;
  height: 362px;
  display: flex;
  flex-direction: column;
  align-items: center;
  border: 1px solid #a9abab;
  border-radius: 7px;
  background: #fff;
  box-shadow: 0 0 4px 2px #cfd2d2;
`;

const DialogClose = styled.div`
  align-self: flex-end;
  height: 34px;
  padding: 19px 20px 0 0;
`;

const DialogTitle = styled.div`
  height: 46px;
  font: 31px/46px ${ui};
  letter-spacing: -0.43px;
  color: #828282;
`;

const DialogText = styled.div`
  height: 36px;
  font: 20.5px/36px ${ui};
  letter-spacing: -0.28px;
  color: #000;
`;

const AuthorizeButton = styled.button`
  width: 172px;
  height: 73px;
  margin-top: 22px;
  padding: 0 0 2px 14px;
  border: none;
  border-radius: 4px;
  background: #0052cc;
  font: 27px/36px ${arial};
  color: #fff;
  -webkit-text-stroke: 0.3px #fff;
`;

const Remember = styled.label`
  height: 40px;
  margin-top: 24px;
  display: flex;
  align-items: center;
  gap: 12px;
`;

/* ---------- taskbar ---------- */

const Taskbar = styled.div`
  height: 60px;
  flex: none;
  display: flex;
  background: linear-gradient(90deg, #1c1c1c 0, #1c1c1c 800px, #241e1e 1200px, #17212a 1400px, #18232b 1480px, #231f1f 1640px, #1e1c1d 1920px);
`;

const Start = styled.div`
  width: 72px;
  padding: 18px 0 0 24px;
`;

const Search = styled.div`
  width: 516px;
  height: 60px;
  display: flex;
  align-items: center;
  gap: 18px;
  padding-left: 16px;
  border: 2px solid #bebebe;
  background: #f2f2f2;
`;

const TaskApp = styled.div`
  width: ${(p) => p.$w || 75}px;
  height: 60px;
  display: flex;
  align-items: center;
  justify-content: center;
  padding-right: ${(p) => p.$pr || 0}px;
  margin-left: ${(p) => p.$ml || 0}px;
  background: ${(p) => (p.$active ? "#4d4b4c" : "transparent")};
  box-shadow: ${(p) => (p.$line ? "inset 0 -3px 0 #76b9ed" : "none")};
`;

const TrayItem = styled.div`
  display: flex;
  align-items: center;
  width: ${(p) => p.$w}px;
`;

const Tray = styled.div`
  display: flex;
  margin-left: auto;
`;

const Clock = styled.div`
  width: 122px;
  display: flex;
  flex-direction: column;
  align-items: center;
  gap: 7px;
  padding: 6px 29px 0 0;
`;

const ShowDesktop = styled.div`
  width: 8px;
  border-left: 2px solid #6a6a6a;
`;

const Chrome = ({ user }) => (
  <svg width="36" height="36" viewBox="-18 -18 36 36">
    <circle r="18" fill="#fbc116" />
    <path d="M-15.6-9A18 18 0 0 1 15.6-9H0L-7.8 4.5Z" fill="#e33b2e" />
    <path d="M-15.6-9A18 18 0 0 0 0 18L7.8 4.5L-7.8 4.5Z" fill="#229342" />
    <path d="M15.6-9A18 18 0 0 1 0 18L7.8 4.5L0-9Z" fill="#fbc116" />
    <circle r="9" fill="#fff" />
    <circle r="7" fill="#2f7df0" />
    {user && (
      <>
        <circle cx="9" cy="9" r="12" fill="#33691e" />
        <text x="9" y="14" fontSize="14" fontFamily="Open Sans" fontWeight="600" fill="#dfe8da" textAnchor="middle">N</text>
      </>
    )}
  </svg>
);

function TaskbarView() {
  return (
    <Taskbar>
      <Start>
        <svg width="24" height="24" viewBox="0 0 24 24" fill="#fff">
          <path d="M0 3.5L10 2V11.5H0ZM11.3 1.8L24 0V11.5H11.3ZM0 12.6H10V22.1L0 20.7ZM11.3 12.6H24V24L11.3 22.3Z" />
        </svg>
      </Start>
      <Search>
        <svg width="24" height="24" viewBox="0 0 24 24" fill="none" stroke="#111" strokeWidth="1.8">
          <circle cx="16" cy="8" r="7.2" /><path d="M10.8 13.2L0.5 23.5" />
        </svg>
        <Text $size={21.8} $color="#2b2b2b" $ls={-0.15} $pt={5}>Type here to search</Text>
      </Search>
      <TaskApp $w={72}>
        <svg width="24" height="24" viewBox="0 0 24 24"><circle cx="12" cy="12" r="10" fill="none" stroke="#fff" strokeWidth="3" /></svg>
      </TaskApp>
      <TaskApp $w={72}>
        <svg width="25" height="24" viewBox="0 0 25 24" fill="none" stroke="#fff" strokeWidth="1.4">
          <path d="M1 0V3.5H16V0M1 24V20H16V24M1 7H16V16.5H1ZM23 0V5.5M23 12V24" />
          <rect x="21.5" y="7" width="3" height="3" fill="#fff" stroke="none" />
        </svg>
      </TaskApp>
      <TaskApp $w={82}><Chrome /></TaskApp>
      <TaskApp $w={68}>
        <svg width="32" height="28" viewBox="0 0 32 28">
          <path d="M0 1Q0 0 1 0H13L15 3H0Z" fill="#e0a008" />
          <path d="M0 4H14L16 2H32V25H0Z" fill="#ffd566" />
          <path d="M5 28V17Q5 14 8 14H24Q27 14 27 17V28H21V21Q21 20 20 20H12Q11 20 11 21V28Z" fill="#3d97e0" />
        </svg>
      </TaskApp>
      <TaskApp $w={82}>
        <svg width="36" height="36" viewBox="0 0 36 36">
          <rect width="36" height="36" fill="#25acd8" />
          <path d="M12 5L8 30H27L28 27H13Z" fill="#0d3b75" />
          <path d="M12 5H17V23H28V27H12Z" fill="#fff" />
        </svg>
      </TaskApp>
      <TaskApp $w={68}>
        <svg width="36" height="34" viewBox="0 0 36 34">
          <path d="M0 12L18 0L36 12V16H0Z" fill="#0b5fb0" />
          <path d="M3 11H33V20L18 30L3 20Z" fill="#efefef" />
          <path d="M0 11L18 23L36 34H0Z" fill="#23a5ee" />
          <path d="M36 11L18 23L36 34Z" fill="#3fcbf8" />
        </svg>
      </TaskApp>
      <TaskApp $w={61} $ml={11} $pr={5} $line>
        <svg width="34" height="34" viewBox="0 0 34 34" style={{ marginBottom: 3 }}>
          <path d="M6 0.5H32.5V33H0.5V6Q1 1 6 0.5Z" fill="#b9dcb5" stroke="#3c9a45" />
          <path d="M14 1H32V16H14Z" fill="#79bf76" />
          <path d="M16 20L34 16L32 33H14Z" fill="#f4f7f2" />
          <path d="M18 22L31 19M18 26L31 23M18 30L31 27" stroke="#57a858" strokeWidth="1.2" />
          <path d="M4 5H10L13 11L17 5H22L16 14L22 24H16L12 17L8 24H3L9 14Z" fill="#1f8a35" />
        </svg>
      </TaskApp>
      <TaskApp $w={87}>
        <svg width="30" height="32" viewBox="0 0 30 32">
          <path d="M0 14C2 4 8 0 15 0C25 0 30 7 30 15V19H10C10 25 15 27 19 27C23 27 26 26 28 24.5V30C25 31.5 22 32 18 32C9 32 4 26 4 19C4 13 8 9 12 8C7 8 3 10 0 14ZM10.5 13.5H20.5C20.5 10 18.5 8 15.5 8C12.5 8 11 10.5 10.5 13.5Z" fill="#0a7bdb" />
        </svg>
      </TaskApp>
      <TaskApp $w={64}>
        <svg width="35" height="36" viewBox="0 0 35 36">
          <path d="M9.5 12V3Q9.5 1 11.5 1H24Q26 1 26 3V12" fill="none" stroke="#dcdcdc" strokeWidth="2" />
          <path d="M0 9H35V34Q35 36 33 36H2Q0 36 0 34Z" fill="#f3f3f3" />
          <path d="M0 9H35V12H0Z" fill="#cfcfcf" />
          <rect x="11" y="17" width="6" height="6" fill="#f25022" /><rect x="18" y="17" width="6" height="6" fill="#7fba00" />
          <rect x="11" y="24" width="6" height="6" fill="#00a4ef" /><rect x="18" y="24" width="6" height="6" fill="#ffb900" />
        </svg>
      </TaskApp>
      <TaskApp $w={73} $ml={7} $pr={2} $active $line><Chrome user /></TaskApp>
      <Tray>
        <TrayItem $w={34}>
          <svg width="18" height="10" viewBox="0 0 18 10"><path d="M1 9L9 1L17 9" fill="none" stroke="#fff" strokeWidth="1.7" /></svg>
        </TrayItem>
        <TrayItem $w={39}>
          <svg width="23" height="14" viewBox="0 0 23 14"><path d="M1 1H21V13H1Z" fill="none" stroke="#fff" strokeWidth="1.5" /><path d="M2.5 3H8V11H2.5ZM21.5 5H23V9H21.5Z" fill="#fff" /></svg>
        </TrayItem>
        <TrayItem $w={33}>
          <svg width="18" height="18" viewBox="0 0 18 18" fill="none" stroke="#fff" strokeWidth="1.4">
            <path d="M1 18A17 17 0 0 1 18 1" stroke="#aaa" /><path d="M5.5 18A12.5 12.5 0 0 1 18 5.5M10 18A8 8 0 0 1 18 10" /><circle cx="16" cy="16" r="1.6" fill="#fff" stroke="none" />
          </svg>
        </TrayItem>
        <TrayItem $w={43}>
          <svg width="22" height="18" viewBox="0 0 22 18" fill="none" stroke="#fff" strokeWidth="1.4">
            <path d="M1 6H4L8.5 1V17L4 12H1Z" /><path d="M12 7Q13.5 9 12 11" /><path d="M15 4.5Q18 9 15 13.5M18 2Q22.5 9 18 16" stroke="#888" />
          </svg>
        </TrayItem>
        <TrayItem $w={44}>
          <svg width="20" height="20" viewBox="0 0 20 20" fill="none" stroke="#fff" strokeWidth="1.5">
            <path d="M6 15L13 2Q15-0.5 16.5 2Q17.5 4 15 7L8 15.5ZM6 15C3 13 0.5 15 1 17.5C2 20 6 19.5 6 17V11Q4 8 1.5 11M10 13C13 15 14 8 17 8.5Q20 10 18 12" />
          </svg>
        </TrayItem>
        <Clock>
          <Text $size={17.7} $color="#fff" $ls={-0.1}>14.57</Text>
          <Text $size={17.7} $color="#fff" $ls={-0.1}>09/08/2023</Text>
        </Clock>
        <TrayItem $w={54}>
          <svg width="36" height="36" viewBox="0 0 36 36">
            <path d="M0 6H24V24H14L11 29L8 24H0Z" fill="#fff" />
            <path d="M5 11H19M5 15H19M5 19H15" stroke="#222" strokeWidth="1.3" />
            <circle cx="23.5" cy="29.5" r="11.5" fill="#333" stroke="#9a9a9a" />
            <text x="23.5" y="36" fontSize="18" fontFamily="Open Sans" fontWeight="600" fill="#fff" textAnchor="middle">4</text>
          </svg>
        </TrayItem>
        <ShowDesktop />
      </Tray>
    </Taskbar>
  );
}

export default function App() {
  return (
    <Screen>
      <Global />
      <Browser />
      <Menus />
      <Main>
        <ShapeSidebar />
        <CanvasArea />
        <FormatPanel />
      </Main>
      <TaskbarView />
      <Dialog>
        <DialogClose>
          <svg width="14" height="14" viewBox="0 0 14 14"><path d="M1.5 1.5L12.5 12.5M12.5 1.5L1.5 12.5" stroke="#b9cadd" strokeWidth="3.2" /></svg>
        </DialogClose>
        <DialogTitle>Authorization required</DialogTitle>
        <DialogText>Authorize this app in OneDrive:</DialogText>
        <AuthorizeButton>Authorize</AuthorizeButton>
        <Remember>
          <Check c="#0075ff" />
          <Text $size={20.5} $color="#111" $ls={-0.62} $pt={4}>Remember me</Text>
        </Remember>
      </Dialog>
    </Screen>
  );
}
